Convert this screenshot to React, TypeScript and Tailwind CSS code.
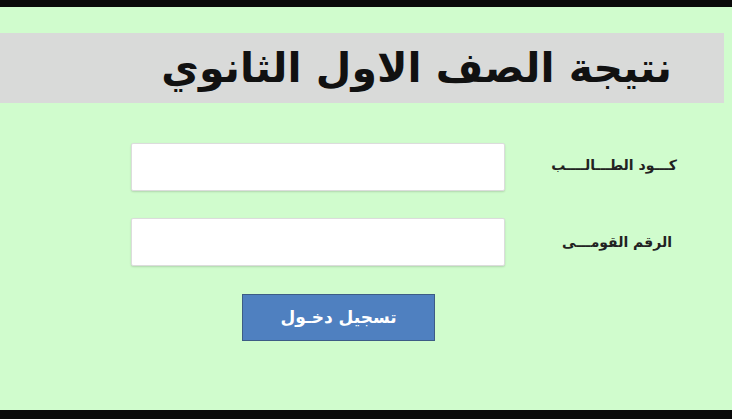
export default function App() {
  return (
    <div
      className="flex h-[419px] w-[732px] flex-col overflow-hidden bg-[#d0fccd]"
      style={{ fontFamily: '"DejaVu Sans", "Noto Sans", sans-serif' }}
    >
      <div className="h-[7px] bg-[#0a0a0a]" />

      <div className="mr-[8px] mt-[26px] flex h-[70px] items-center justify-end bg-[#d9dad9] pr-[52px]">
        <h1 dir="rtl" className="text-[41px] font-bold leading-none text-[#111]">
          نتيجة الصف الاول الثانوي
        </h1>
      </div>

      <div className="mt-[40px] flex flex-col gap-[27px]">
        <div className="flex items-center pl-[131px]">
          <input
            type="text"
            className="h-[48px] w-[374px] rounded-[2px] border border-[#dcdcdc] bg-white shadow-[0_1px_2px_rgba(0,0,0,0.15)] outline-none"
          />
          <span dir="rtl" className="flex-1 pb-[4px] pr-[55px] text-right text-[14px] font-bold text-[#222]">
            كـــود الطـــالــــب
          </span>
        </div>
        <div className="flex items-center pl-[131px]">
          <input
            type="text"
            className="h-[48px] w-[374px] rounded-[2px] border border-[#dcdcdc] bg-white shadow-[0_1px_2px_rgba(0,0,0,0.15)] outline-none"
          />
          <span dir="rtl" className="flex-1 pr-[60px] text-right text-[14px] font-bold text-[#222]">
            الرقم القومـــى
          </span>
        </div>
      </div>

      <div className="mt-[28px] pl-[242px]">
        <button
          type="button"
          className="flex h-[47px] w-[193px] items-center justify-center border border-[#3d5c85] bg-[#4f80c0] text-[17px] font-bold text-white"
        >
          <span dir="rtl">تسجيل دخـول</span>
        </button>
      </div>

      <div className="mt-auto h-[9px] bg-[#0a0a0a]" />
    </div>
  );
}
